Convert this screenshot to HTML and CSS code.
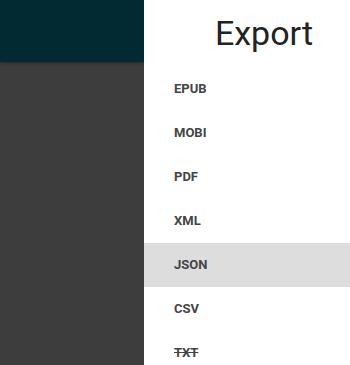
FILE: index.html
```html
<!DOCTYPE html>
<html lang="en">
<head>
    <meta charset="UTF-8">
    <meta name="viewport" content="width=device-width, initial-scale=1.0">
    <title>Export</title>
    <link rel="stylesheet" href="styles.css">
</head>
<body>
    <div class="backdrop">
        <div class="app-bar"></div>
        <div class="app-body"></div>
    </div>

    <div class="dialog">
        <h1 class="dialog-title">Export</h1>
        <ul class="format-list">
            <li class="format-item">EPUB</li>
            <li class="format-item">MOBI</li>
            <li class="format-item">PDF</li>
            <li class="format-item">XML</li>
            <li class="format-item active">JSON</li>
            <li class="format-item">CSV</li>
            <li class="format-item disabled">TXT</li>
        </ul>
    </div>
</body>
</html>
```

FILE: styles.css
```css
body {
    font-family: Roboto, 'Liberation Sans', sans-serif;
    margin: 0;
    padding: 0;
    height: 365px;
    display: flex;
    overflow: hidden;
    background-color: #3d3d3d;
}

.backdrop {
    width: 144px;
    flex-shrink: 0;
    display: flex;
    flex-direction: column;
}

.app-bar {
    height: 62px;
    background-color: #012a32;
    box-shadow: 0 1px 3px rgba(0, 0, 0, 0.4);
}

.app-body {
    flex: 1;
}

.dialog {
    flex: 1;
    overflow: hidden;
    background-color: #fff;
}

.dialog-title {
    margin: 0;
    padding-left: 34px;
    height: 67px;
    line-height: 66px;
    font-size: 34px;
    font-weight: 400;
    color: #222;
    text-align: center;
}

.format-list {
    list-style: none;
    margin: 0;
    padding: 0;
}

.format-item {
    height: 44px;
    line-height: 44px;
    padding-left: 30px;
    font-size: 13px;
    font-weight: 700;
    color: #444;
}

.format-item.active {
    background-color: #dddddd;
}

.format-item.disabled {
    text-decoration: line-through;
}
```
